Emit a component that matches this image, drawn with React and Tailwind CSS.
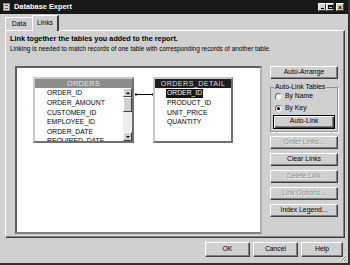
import React from "react";

function Btn({ children, disabled, def, className = "" }) {
  const edge = def
    ? "border border-black shadow-[inset_1px_1px_0_#fff,inset_-1px_-1px_0_#404040,inset_-2px_-2px_0_#808080]"
    : "border border-t-white border-l-white border-r-[#404040] border-b-[#404040] shadow-[inset_-1px_-1px_0_#808080]";
  const tone = disabled ? "text-[#8e8e8e] [text-shadow:1px_1px_0_#f4f4f4]" : "text-black";
  return (
    <div className={`flex items-center justify-center bg-[#d0d0d0] text-[6.8px] leading-none ${edge} ${tone} ${className}`}>
      {children}
    </div>
  );
}

function Radio({ checked, label }) {
  return (
    <div className="flex items-center gap-[3px] h-[10px]">
      <div className="w-[7px] h-[7px] rounded-full bg-white border border-t-[#606060] border-l-[#606060] border-r-[#e8e8e8] border-b-[#e8e8e8] flex items-center justify-center">
        {checked && <div className="w-[3px] h-[3px] rounded-full bg-black" />}
      </div>
      <span className="text-[6.8px] leading-none text-black">{label}</span>
    </div>
  );
}

function WinBtn({ children }) {
  return (
    <div className="w-[8px] h-[8px] bg-[#d0d0d0] border border-t-white border-l-white border-r-[#404040] border-b-[#404040] flex items-center justify-center">
      {children}
    </div>
  );
}

export default function App() {
  const ordersFields = ["ORDER_ID", "ORDER_AMOUNT", "CUSTOMER_ID", "EMPLOYEE_ID", "ORDER_DATE", "REQUIRED_DATE"];
  const detailFields = ["ORDER_ID", "PRODUCT_ID", "UNIT_PRICE", "QUANTITY"];
  return (
    <div className="w-[350px] h-[265px] bg-[#d0d0d0] flex flex-col overflow-hidden border-r-2 border-b-2 border-r-[#303030] border-b-[#303030] font-['Liberation_Sans',Arial,sans-serif] relative">
      {/* title bar */}
      <div className="h-[14px] bg-[#181818] flex items-center pl-[3px] pr-[4px] shrink-0">
        <div className="w-[7px] h-[8px] bg-[#d8d8d8] border border-[#888] flex flex-col justify-evenly px-[1px]">
          <div className="h-px bg-[#555]" />
          <div className="h-px bg-[#555]" />
        </div>
        <span className="ml-[4px] text-[7.4px] font-bold text-white leading-none">Database Expert</span>
        <div className="ml-auto flex items-center gap-0">
          <WinBtn>
            <div className="w-[3px] h-px bg-black mt-[3px]" />
          </WinBtn>
          <WinBtn>
            <div className="w-[5px] h-[4px] border border-black border-t-2" />
          </WinBtn>
          <div className="w-[2px]" />
          <WinBtn>
            <span className="text-[7px] font-bold leading-none text-black">×</span>
          </WinBtn>
        </div>
      </div>

      {/* tabs */}
      <div className="h-[16px] flex items-end pl-[5px] shrink-0">
        <div className="h-[13px] w-[27px] flex items-center justify-center border-t border-l border-t-white border-l-white text-[6.8px] text-black leading-none">
          Data
        </div>
        <div className="h-[16px] w-[27px] -mb-px z-10 bg-[#d0d0d0] flex items-center justify-center border-t border-l border-r-2 border-t-white border-l-white border-r-[#404040] text-[6.8px] text-black leading-none">
          Links
        </div>
      </div>

      {/* panel */}
      <div className="ml-[5px] w-[340px] h-[208px] border border-t-white border-l-white border-r-[#404040] border-b-[#404040] shadow-[inset_-1px_-1px_0_#808080] flex flex-col shrink-0">
        <div className="pl-[4px] pt-[3px]">
          <div className="text-[7.3px] font-bold text-black leading-[9px]">Link together the tables you added to the report.</div>
          <div className="text-[6.4px] text-black leading-[9px] mt-px">Linking is needed to match records of one table with corresponding records of another table.</div>
        </div>
        <div className="flex mt-[13px] pl-[9px]">
          {/* canvas */}
          <div className="relative w-[247px] h-[168px] bg-white border-2 border-t-[#606060] border-l-[#606060] border-r-[#b0b0b0] border-b-[#808080]">
            {/* ORDERS */}
            <div className="absolute left-[16px] top-[9px] w-[101px] h-[66px] bg-white border-2 border-t-[#c8c8c8] border-l-[#c8c8c8] border-r-[#707070] border-b-[#707070] flex flex-col overflow-hidden">
              <div className="h-[9px] bg-[#8c8c8c] text-[#ececec] text-[7.2px] tracking-[0.4px] leading-none flex items-center justify-center shrink-0">ORDERS</div>
              <div className="flex flex-1 overflow-hidden">
                <div className="flex-1 pl-[12px] pt-px overflow-hidden">
                  {ordersFields.map((f) => (
                    <div key={f} className="h-[9.6px] flex items-center text-[6.8px] text-black leading-none whitespace-nowrap">{f}</div>
                  ))}
                </div>
                <div className="w-[9px] flex flex-col bg-[#ececec]">
                  <div className="h-[9px] bg-[#d0d0d0] border border-t-white border-l-white border-r-[#404040] border-b-[#404040] flex items-center justify-center">
                    <div className="w-0 h-0 border-l-[2px] border-r-[2px] border-b-[2px] border-l-transparent border-r-transparent border-b-black" />
                  </div>
                  <div className="h-[15px] bg-[#d0d0d0] border border-t-white border-l-white border-r-[#404040] border-b-[#404040]" />
                  <div className="flex-1" />
                  <div className="h-[9px] bg-[#d0d0d0] border border-t-white border-l-white border-r-[#404040] border-b-[#404040] flex items-center justify-center">
                    <div className="w-0 h-0 border-l-[2px] border-r-[2px] border-t-[2px] border-l-transparent border-r-transparent border-t-black" />
                  </div>
                </div>
              </div>
            </div>

            {/* link line */}
            <svg className="absolute left-[117px] top-[24px]" width="21" height="5" viewBox="0 0 21 5">
              <line x1="2" y1="2.5" x2="19" y2="2.5" stroke="#000" strokeWidth="1" />
              <rect x="1" y="1.5" width="2" height="2" fill="#000" />
              <rect x="18" y="1.5" width="2" height="2" fill="#000" />
            </svg>

            {/* ORDERS_DETAIL */}
            <div className="absolute left-[136px] top-[9px] w-[80px] h-[66px] bg-white border-2 border-t-[#c8c8c8] border-l-[#c8c8c8] border-r-[#707070] border-b-[#707070] flex flex-col overflow-hidden">
              <div className="h-[9px] bg-[#1e1e1e] text-[#dcdcdc] text-[7.2px] tracking-[0.4px] leading-none flex items-center justify-center shrink-0">ORDERS_DETAIL</div>
              <div className="pl-[11px] pt-px">
                {detailFields.map((f, i) => (
                  <div key={f} className="h-[9.6px] flex items-center">
                    <span className={`text-[6.8px] leading-none whitespace-nowrap px-px py-[1px] ${i === 0 ? "bg-[#151515] text-white" : "text-black"}`}>{f}</span>
                  </div>
                ))}
              </div>
            </div>
          </div>

          {/* right column */}
          <div className="ml-[8px] w-[68px] flex flex-col">
            <Btn className="h-[13px]">Auto-Arrange</Btn>
            <fieldset className="mt-[5px] border border-[#909090] shadow-[1px_1px_0_#fff] px-[2px] pb-[2px] pt-0">
              <legend className="text-[6.8px] leading-none px-px ml-[1px] text-black">Auto-Link Tables</legend>
              <div className="pl-[2px] flex flex-col gap-[2px] mt-[1px]">
                <Radio label="By Name" />
                <Radio label="By Key" checked />
              </div>
              <Btn def className="h-[14px] mt-[1px]">Auto-Link</Btn>
            </fieldset>
            <Btn disabled className="h-[13px] mt-[4px]">Order Links...</Btn>
            <Btn className="h-[13px] mt-[4px]">Clear Links</Btn>
            <Btn disabled className="h-[13px] mt-[4px]">Delete Link</Btn>
            <Btn disabled className="h-[13px] mt-[4px]">Link Options...</Btn>
            <Btn className="h-[13px] mt-[4px]">Index Legend...</Btn>
          </div>
        </div>
      </div>

      {/* bottom buttons */}
      <div className="flex pl-[205px] mt-[4px] gap-[3px]">
        <Btn className="w-[45px] h-[15px]">OK</Btn>
        <Btn className="w-[45px] h-[15px]">Cancel</Btn>
        <Btn className="w-[42px] h-[15px]">Help</Btn>
      </div>
      <svg className="absolute right-[1px] bottom-[1px]" width="8" height="8" viewBox="0 0 8 8">
        <line x1="7" y1="1" x2="1" y2="7" stroke="#fff" />
        <line x1="7" y1="2" x2="2" y2="7" stroke="#808080" />
        <line x1="7" y1="4" x2="4" y2="7" stroke="#fff" />
        <line x1="7" y1="5" x2="5" y2="7" stroke="#808080" />
      </svg>
    </div>
  );
}
